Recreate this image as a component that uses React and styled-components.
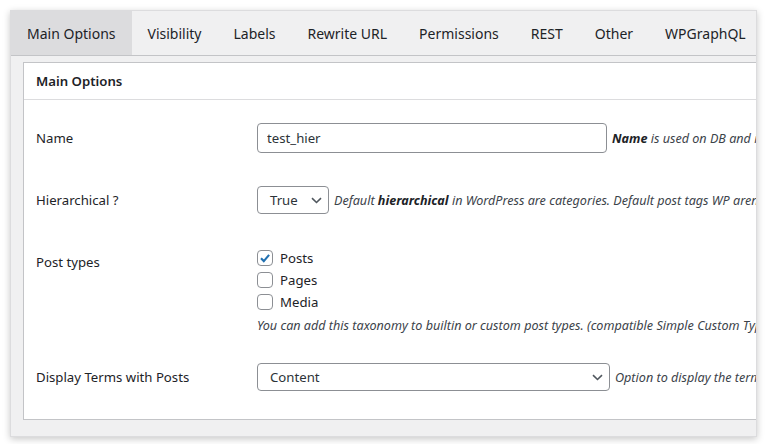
import styled, { createGlobalStyle } from "styled-components";

const GlobalStyle = createGlobalStyle`
  body {
    margin: 0;
    background: #ffffff;
    font-family: "Noto Sans", "Open Sans", sans-serif;
    color: #1d2327;
  }
`;

const tabs = ["Main Options", "Visibility", "Labels", "Rewrite URL", "Permissions", "REST", "Other", "WPGraphQL"];

export default function App() {
  return (
    <>
      <GlobalStyle />
      <Page>
        <Frame>
          <TabBar>
            {tabs.map((t, i) => (
              <Tab key={t} $active={i === 0}>{t}</Tab>
            ))}
          </TabBar>
          <Panel>
            <PanelHeader>Main Options</PanelHeader>
            <Body>
              <Row $top={0}>
                <Label>Name</Label>
                <Field>
                  <TextInput defaultValue="test_hier" />
                  <Desc><b>Name</b> is used on DB and in code to identify the taxonomy</Desc>
                </Field>
              </Row>
              <Row $top={33}>
                <Label>Hierarchical ?</Label>
                <Field>
                  <Select $w={72}>
                    <span>True</span>
                    <Chevron />
                  </Select>
                  <Desc>Default <b>hierarchical</b> in WordPress are categories. Default post tags WP aren't hierarchical.</Desc>
                </Field>
              </Row>
              <Row $top={36} $align="flex-start">
                <Label $pt={3}>Post types</Label>
                <Stack>
                  <Check checked>Posts</Check>
                  <Check>Pages</Check>
                  <Check>Media</Check>
                  <Desc $block>You can add this taxonomy to builtin or custom post types. (compatible Simple Custom Types)</Desc>
                </Stack>
              </Row>
              <Row $top={29}>
                <Label>Display Terms with Posts</Label>
                <Field>
                  <Select $w={353}>
                    <span>Content</span>
                    <Chevron />
                  </Select>
                  <Desc>Option to display the terms with the posts content</Desc>
                </Field>
              </Row>
            </Body>
          </Panel>
        </Frame>
      </Page>
    </>
  );
}

function Chevron() {
  return (
    <svg width="11" height="7" viewBox="0 0 11 7">
      <path d="M1 1.2l4.5 4.3 4.5-4.3" fill="none" stroke="#50575e" strokeWidth="1.6" />
    </svg>
  );
}

function Check({ checked, children }) {
  return (
    <CheckRow>
      <Box>
        {checked && (
          <svg width="14" height="14" viewBox="0 0 14 14">
            <path d="M3 7.2l2.8 2.9 5.3-6.2" fill="none" stroke="#2271b1" strokeWidth="2.1" />
          </svg>
        )}
      </Box>
      <span>{children}</span>
    </CheckRow>
  );
}

const Page = styled.div`
  padding: 10px 8px 7px 10px;
`;

const Frame = styled.div`
  height: 425px;
  background: #f0f0f1;
  border: 1px solid #dcdcde;
  box-shadow: 0 2px 7px rgba(0, 0, 0, 0.22);
  overflow: hidden;
`;

const TabBar = styled.div`
  display: flex;
  height: 44px;
  border-bottom: 1px solid #c3c4c7;
`;

const Tab = styled.div`
  display: flex;
  align-items: center;
  padding: 0 16px;
  font-size: 14px;
  white-space: nowrap;
  color: #1d2327;
  background: ${(p) => (p.$active ? "#dcdcde" : "transparent")};
`;

const Panel = styled.div`
  margin: 6px 0 0 12px;
  width: 780px;
  height: 356px;
  background: #ffffff;
  border: 1px solid #c3c4c7;
`;

const PanelHeader = styled.div`
  height: 36px;
  display: flex;
  align-items: center;
  padding: 0 12px;
  font-size: 13.2px;
  font-weight: 600;
  border-bottom: 1px solid #dcdcde;
`;

const Body = styled.div`
  display: flex;
  flex-direction: column;
  padding: 23px 0 0 12px;
`;

const Row = styled.div`
  display: flex;
  align-items: ${(p) => p.$align || "center"};
  margin-top: ${(p) => p.$top}px;
`;

const Label = styled.div`
  width: 221px;
  flex-shrink: 0;
  font-size: 13.2px;
  padding-top: ${(p) => p.$pt || 0}px;
  color: #1d2327;
`;

const Field = styled.div`
  display: flex;
  align-items: center;
  white-space: nowrap;
`;

const TextInput = styled.input`
  width: 350px;
  height: 30px;
  box-sizing: border-box;
  border: 1px solid #8c8f94;
  border-radius: 4px;
  padding: 0 9px;
  font-family: inherit;
  font-size: 13.2px;
  color: #2c3338;
  outline: none;
`;

const Select = styled.div`
  width: ${(p) => p.$w}px;
  height: 28px;
  box-sizing: border-box;
  display: flex;
  align-items: center;
  justify-content: space-between;
  padding: 0 6px 0 12px;
  border: 1px solid #8c8f94;
  border-radius: 4px;
  font-size: 13.2px;
  color: #2c3338;
  background: #ffffff;
`;

const Desc = styled.span`
  display: ${(p) => (p.$block ? "block" : "inline")};
  margin-left: ${(p) => (p.$block ? 0 : 5)}px;
  margin-top: ${(p) => (p.$block ? 1 : 0)}px;
  font-size: 12.6px;
  font-style: italic;
  color: #3c434a;
  white-space: nowrap;
  b {
    font-weight: 700;
    color: #1d2327;
  }
`;

const Stack = styled.div`
  display: flex;
  flex-direction: column;
  gap: 6px;
`;

const CheckRow = styled.label`
  display: flex;
  align-items: center;
  gap: 7px;
  font-size: 13.2px;
  height: 16px;
  color: #1d2327;
`;

const Box = styled.span`
  width: 16px;
  height: 16px;
  box-sizing: border-box;
  border: 1px solid #8c8f94;
  border-radius: 4px;
  display: flex;
  align-items: center;
  justify-content: center;
  background: #ffffff;
`;
